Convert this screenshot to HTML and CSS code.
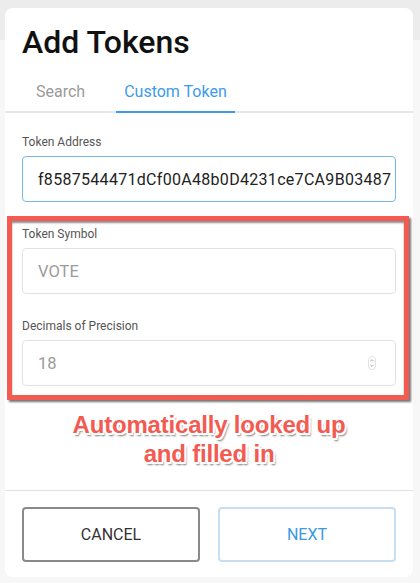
FILE: index.html
```html
<!DOCTYPE html>
<html>
<head>
<meta charset="utf-8">
<link rel="stylesheet" href="styles.css">
</head>
<body>
<div class="card">
  <h1 class="title">Add Tokens</h1>
  <div class="tabs">
    <div class="tab">Search</div>
    <div class="tab active">Custom Token</div>
  </div>
  <div class="form">
    <div class="field">
      <div class="label">Token Address</div>
      <div class="box focused"><span class="value addr">f8587544471dCf00A48b0D4231ce7CA9B03487</span></div>
    </div>
    <div class="highlight">
      <div class="field">
        <div class="label">Token Symbol</div>
        <div class="box"><span class="value muted">VOTE</span></div>
      </div>
      <div class="field">
        <div class="label">Decimals of Precision</div>
        <div class="box"><span class="value muted">18</span>
          <svg class="spin" width="8" height="14" viewBox="0 0 8 14">
            <rect x="0.5" y="0.5" width="7" height="13" rx="3.5" fill="#fff" stroke="#e2e2e2"/>
            <path d="M2.4 5.2 L4 3.6 L5.6 5.2" fill="none" stroke="#a0a0a0" stroke-width="0.9"/>
            <path d="M2.4 8.8 L4 10.4 L5.6 8.8" fill="none" stroke="#a0a0a0" stroke-width="0.9"/>
          </svg>
        </div>
      </div>
    </div>
    <div class="note">Automatically looked up<br>and filled in</div>
  </div>
  <div class="footer">
    <button class="btn cancel">CANCEL</button>
    <button class="btn next">NEXT</button>
  </div>
</div>
</body>
</html>
```

FILE: styles.css
```css
* { box-sizing: border-box; }
html, body { margin: 0; padding: 0; }
body {
  width: 420px;
  height: 583px;
  overflow: hidden;
  background: linear-gradient(#ececec 0, #ececec 40px, #f7f7f7 40px);
  font-family: Roboto, "Liberation Sans", sans-serif;
}
.card {
  margin: 8px 7px 0 5px;
  width: 408px;
  height: 569px;
  background: #fff;
  border-radius: 8px;
  padding-top: 14px;
  display: flex;
  flex-direction: column;
}
.title {
  margin: 0;
  padding: 0 17px;
  font-size: 32px;
  line-height: 40px;
  font-weight: 500;
  color: #111;
}
.tabs {
  margin-top: 20px;
  display: flex;
  gap: 23px;
  padding-left: 23px;
  border-bottom: 2px solid #e3e6ea;
}
.tab {
  font-size: 16px;
  line-height: 20px;
  padding: 0 8px 7px;
  color: #9a9a9a;
  border-bottom: 2px solid transparent;
  margin-bottom: -2px;
}
.tab.active {
  color: #3d9be9;
  border-bottom: 2px solid #3d9be9;
  padding-bottom: 9px;
  margin-bottom: -2px;
}
.form {
  padding: 21px 17px 0;
  flex: 1;
}
.label {
  font-size: 12px;
  line-height: 16px;
  color: #555;
  margin-bottom: 6px;
}
.box {
  height: 46px;
  border: 1px solid #dfe3e8;
  border-radius: 4px;
  padding: 0 14px 0 15px;
  display: flex;
  align-items: center;
  justify-content: space-between;
}
.box.focused { border-color: #76b9ec; }
.value {
  font-size: 16.5px;
  color: #222;
}
.value.addr {
  font-size: 16px;
  letter-spacing: 0.3px;
}
.value.muted { color: #9b9b9b; }
.spin { margin-right: 5px; }
.highlight {
  margin: 14px -13px 0 -15px;
  border: 5px solid #f35b52;
  padding: 5px 8px 9px 10px;
  box-shadow: 2px 2px 2px rgba(0,0,0,0.55), inset 0 2px 2px rgba(0,0,0,0.45);
}
.highlight .field + .field { margin-top: 24px; }
.note {
  margin-top: 10px;
  text-align: center;
  font-family: "Liberation Sans", Arial, sans-serif;
  font-weight: bold;
  font-size: 24px;
  line-height: 29px;
  letter-spacing: -0.2px;
  color: #f35b52;
  text-shadow:
    -2px 0 0 #fff, 2px 0 0 #fff, 0 -2px 0 #fff, 0 2px 0 #fff,
    -1.5px -1.5px 0 #fff, 1.5px -1.5px 0 #fff, -1.5px 1.5px 0 #fff, 1.5px 1.5px 0 #fff,
    2px 3px 2px rgba(0,0,0,0.55);
}
.footer {
  border-top: 1px solid #dde3ea;
  padding: 16px 17px 15px;
  display: flex;
  gap: 18px;
}
.btn {
  flex: 1;
  height: 55px;
  border-radius: 4px;
  background: #fff;
  font-family: Roboto, "Liberation Sans", sans-serif;
  font-size: 16px;
}
.cancel { border: 2px solid #8a8a8a; color: #333; }
.next { border: 2px solid #c6dff3; color: #3b99e3; }
```
